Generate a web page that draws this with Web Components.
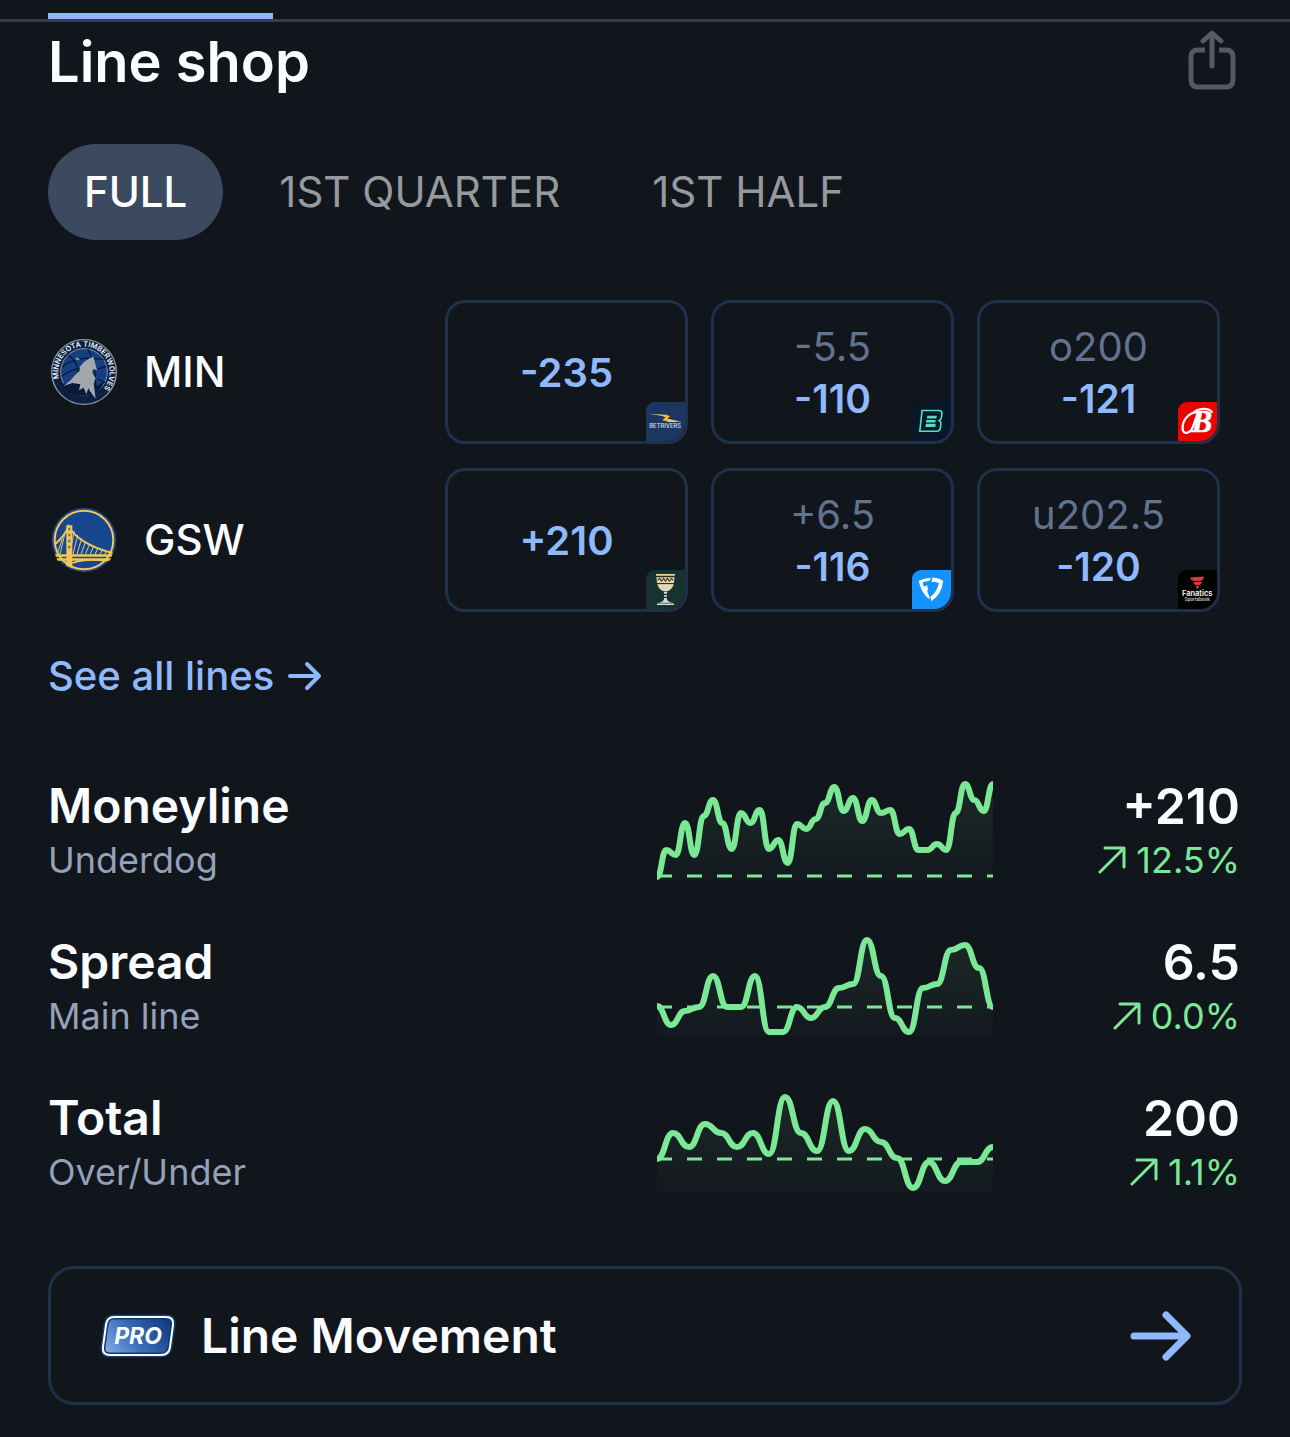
<!DOCTYPE html>
<html lang="en">
<head>
<meta charset="utf-8">
<meta name="viewport" content="width=device-width, initial-scale=1">
<title>Line shop</title>
<style>
  html {
    background: #11151c;
  }
  body {
    margin: 0;
    color: #fafcff;
    font-family: Inter, 'Liberation Sans', sans-serif;
    --accent: #8fb9fd;
    --line: #1f304a;
    --up: #7be895;
    --muted: #94a1b8;
  }
</style>
</head>
<body>
<line-shop></line-shop>

<script>
'use strict';

const bookLogos = {
  betrivers: `
    <rect width="120" height="120" fill="#1b3660"/>
    <path d="M9 36L62 39L74 44L66 51L108 61L68 61L50 55L60 48L46 41Z" fill="#f0bd3c"/>
    <path d="M9 36L48 41L56 44ZM108 61L72 57L66 61Z" fill="#dfe3e6"/>
    <text x="59" y="81" font-size="18" font-weight="500" fill="#dbe3ef" text-anchor="middle">BETRIVERS</text>`,
  espnbet: `
    <rect width="120" height="120" fill="#0a1728"/>
    <path d="M31 26H84Q93 27 92 37L90 49Q89 55 84 57Q90 61 89 68L87 81Q85 90 76 90H24Z" fill="none" stroke="#4fe0cb" stroke-width="5"/>
    <path d="M47 42H76L75 51H46ZM44 55H73L72 63H43ZM43 67H73L72 77H41Z" fill="#4fe0cb"/>`,
  bally: `
    <rect width="120" height="120" fill="#ec0000"/>
    <text x="42" y="91" font-family="Liberation Serif, serif" font-style="italic" font-size="94" fill="#fff" stroke="#fff" stroke-width="2">B</text>
    <path d="M64 33C38 26 13 55 14 82C15 102 39 98 46 76L61 34M46 34C62 17 96 17 104 31" fill="none" stroke="#fff" stroke-width="7" stroke-linecap="round"/>`,
  goblet: `
    <rect width="120" height="120" fill="#17332f"/>
    <path d="M31 12H89V18H31ZM32 22H88L86 40H34ZM35 43H85C83 57 70 66 60 66C50 66 37 57 35 43Z" fill="#e3d9a5"/>
    <path d="M32 20H88M34 42H86" stroke="#2b3026" stroke-width="3"/>
    <path d="M36 32L42 26L48 34L54 26L60 34L66 26L72 34L78 26L84 32" fill="none" stroke="#4b4a28" stroke-width="4"/>
    <path d="M45 45H76L66 60H54Z" fill="#d8d8d3"/>
    <path d="M55 68H65V73H55ZM56 77H64V82H56ZM56 86H64C64 96 72 98 83 101H37C48 98 56 96 56 86ZM34 103H86V108H34Z" fill="#dededb"/>`,
  fanduel: `
    <rect width="120" height="120" fill="#1493ff"/>
    <path d="M21 33Q37 25 58 24L53 34Q42 35 33 38Q34 45 36 51L49 48L45 58L39 59Q43 70 52 78L55 91Q26 70 21 33Z" fill="#fff"/>
    <path d="M64 23Q82 24 96 33Q92 75 59 96L57 82Q77 68 83 40Q72 36 59 36Z" fill="#fff"/>
    <path d="M38 58L50 54L47 67L54 83L48 82Q40 72 38 58Z" fill="#fff"/>`,
  fanatics: `
    <rect width="120" height="120" fill="#000"/>
    <path d="M36 24Q58 20 81 21Q78 32 68 34L50 34Q40 33 36 24ZM46 38Q58 36 74 36Q71 47 60 47L56 47Q48 45 46 38ZM55 49H65Q64 55 59 59Q56 55 55 49Z" fill="#d63c40"/>
    <text x="59" y="81" font-size="23" font-weight="600" fill="#fff" text-anchor="middle">Fanatics</text>
    <text x="59" y="96" font-size="14" fill="#cfcfcf" text-anchor="middle">Sportsbook</text>`
};

const teamLogos = {
  MIN: `
    <circle cx="99" cy="99" r="97" fill="#0c2041" stroke="#8b98a8" stroke-width="4"/>
    <circle cx="99" cy="99" r="70" fill="#153f82" stroke="#8b98a8" stroke-width="3"/>
    <path d="M34 84Q80 46 158 62M52 50Q86 62 92 168M110 30Q140 80 132 164M32 112Q70 84 104 88M140 90L166 82M140 120L166 132" fill="none" stroke="#0a1a36" stroke-width="4"/>
    <path d="M30 133Q58 138 76 116L140 140L160 126Q148 170 99 170Q50 170 30 133Z" fill="#081a38"/>
    <path d="M127 53L134 78L138 94L126 90L124 102L134 118L128 132L134 179L118 158L112 148L106 166L98 146L84 154L88 136L64 132L38 141L60 122L72 108L86 96L86 84L98 70L116 58Z" fill="#a2a6ad"/>
    <path d="M72 57L82 56L86 63L76 64Z" fill="#55bd4a"/>
    <path id="ring" d="M28 130A77 77 0 1 1 150 157" fill="none"/>
    <text font-size="22" font-weight="600" fill="#f1f4f7"><textPath href="#ring" startOffset="50%" text-anchor="middle">MINNESOTA TIMBERWOLVES</textPath></text>`,
  GSW: `
    <circle cx="99" cy="99" r="97" fill="#1c4480"/>
    <circle cx="99" cy="99" r="88" fill="#16478f" stroke="#f2c65a" stroke-width="6"/>
    <path d="M50 66L50 142M41 82L27 142M34 96L18 142M70 73L56 142M80 84L66 142M92 94L78 142M104 103L90 142M116 111L103 142M128 117L118 142M141 123L132 142M154 128L147 142M167 132L161 142" stroke="#d9c88f" stroke-width="3"/>
    <path d="M12 112Q42 86 52 58Q84 112 184 138" fill="none" stroke="#f2c65a" stroke-width="6"/>
    <path d="M13 142H184L182 149H14ZM16 154H180L176 161H20Z" fill="#f2c65a"/>
    <path d="M46 55H64V184L46 176Z" fill="#f2c65a"/>
    <path d="M52 66H58M52 84H58M52 102H58M52 120H58" stroke="#4b6698" stroke-width="8"/>
    <path d="M64 168Q104 154 170 161" fill="none" stroke="#f2c65a" stroke-width="5"/>`
};

// evenly spaced values joined by curves that are level at every point
function smoothPath(values, width) {
  const step = width / (values.length - 1);
  let d = `M0 ${values[0]}`;
  for (let i = 1; i < values.length; i++) {
    const x = i * step;
    const mid = (x - step / 2).toFixed(1);
    d += `C${mid} ${values[i - 1]} ${mid} ${values[i]} ${x.toFixed(1)} ${values[i]}`;
  }
  return d;
}

class BaseElement extends HTMLElement {
  connectedCallback() {
    if (!this.shadowRoot) {
      this.attachShadow({ mode: 'open' });
    }
    this.shadowRoot.innerHTML = this.render();
  }
  attr(name) {
    return this.getAttribute(name) || '';
  }
}

class TopIndicator extends BaseElement {
  render() {
    return `
      <style>
        :host {
          display: block;
          padding: 13px 48px 0;
          border-bottom: 3px solid #3a3d42;
        }
        span {
          display: block;
          width: 225px;
          height: 6px;
          background: var(--accent);
        }
      </style>
      <span></span>`;
  }
}

class ShopHeader extends BaseElement {
  render() {
    return `
      <style>
        :host {
          display: flex;
          align-items: center;
          justify-content: space-between;
          height: 80px;
          padding: 0 52px 0 48px;
        }
        h1 {
          margin: 0;
          font-size: 56px;
          line-height: 80px;
          font-weight: 600;
        }
        button {
          display: flex;
          padding: 0;
          border: 0;
          background: none;
          color: #56595e;
        }
      </style>
      <h1><slot></slot></h1>
      <button type="button" aria-label="Share">
        <svg width="52" height="64" viewBox="0 0 52 64" fill="none" stroke="currentColor" stroke-width="5" stroke-linecap="round" stroke-linejoin="round">
          <path d="M26 36V4M17 11L26 3L35 11"/>
          <path d="M19 20H12Q5 20 5 27V50Q5 57 12 57H40Q47 57 47 50V27Q47 20 40 20H33" stroke-linecap="butt"/>
        </svg>
      </button>`;
  }
}

class PeriodTab extends BaseElement {
  render() {
    const selected = this.hasAttribute('selected');
    return `
      <style>
        :host {
          display: block;
        }
        button {
          height: 96px;
          padding: 0 36px;
          border: 0;
          border-radius: 48px;
          background: none;
          color: #96999d;
          font: 400 42px/96px Inter, 'Liberation Sans', sans-serif;
          white-space: nowrap;
        }
        button[aria-pressed="true"] {
          background: #3c4a60;
          color: #fff;
          font-weight: 500;
        }
      </style>
      <button type="button" aria-pressed="${selected}"><slot></slot></button>`;
  }
}

class TeamName extends BaseElement {
  render() {
    const code = this.attr('code');
    return `
      <style>
        :host {
          display: flex;
          align-items: center;
          gap: 24px;
          font-size: 42px;
          line-height: 52px;
          font-weight: 500;
        }
        svg {
          width: 66px;
          height: 66px;
          margin: 0 3px;
        }
      </style>
      <svg viewBox="0 0 198 198" aria-hidden="true">${teamLogos[code]}</svg>
      <span>${code}</span>`;
  }
}

class OddsCell extends BaseElement {
  render() {
    const line = this.attr('line');
    return `
      <style>
        :host {
          display: block;
        }
        button {
          position: relative;
          display: flex;
          flex-direction: column;
          align-items: center;
          justify-content: center;
          width: 100%;
          height: 144px;
          padding: 2px 0 0;
          overflow: hidden;
          border: 3px solid var(--line);
          border-radius: 20px;
          background: none;
          color: var(--accent);
          font: 600 40px/52px Inter, 'Liberation Sans', sans-serif;
        }
        .line {
          color: #62738e;
          font-weight: 400;
        }
        .line + .price {
          font-size: 39px;
        }
        svg {
          position: absolute;
          right: 0;
          bottom: 0;
          width: 39px;
          height: 39px;
          border-top-left-radius: 9px;
        }
      </style>
      <button type="button">
        ${line ? `<span class="line">${line}</span>` : ''}
        <span class="price">${this.attr('price')}</span>
        <svg viewBox="0 0 120 120" aria-hidden="true">${bookLogos[this.attr('book')]}</svg>
      </button>`;
  }
}

class OddsBoard extends BaseElement {
  render() {
    return `
      <style>
        :host {
          display: grid;
          grid-template-columns: 1fr repeat(3, 243px);
          gap: 24px 23px;
          align-items: center;
          padding: 60px 70px 0 48px;
        }
      </style>
      <slot></slot>`;
  }
}

class AllLines extends BaseElement {
  render() {
    return `
      <style>
        :host {
          display: flex;
          padding: 38px 48px 0;
        }
        a {
          display: flex;
          align-items: center;
          gap: 14px;
          color: var(--accent);
          font-size: 40px;
          line-height: 52px;
          font-weight: 500;
          text-decoration: none;
        }
      </style>
      <a href="#lines"><slot></slot>
        <svg width="34" height="30" viewBox="0 0 34 30" fill="none" stroke="currentColor" stroke-width="4" stroke-linecap="round" stroke-linejoin="round" aria-hidden="true">
          <path d="M2 15H30M19 3L31 15L19 27"/>
        </svg>
      </a>`;
  }
}

class TrendChart extends BaseElement {
  render() {
    const values = this.attr('values').split(',').map(Number);
    const base = this.attr('base');
    const d = smoothPath(values, 336);
    return `
      <style>
        :host {
          display: block;
        }
        svg {
          display: block;
          width: 100%;
          height: 100px;
        }
      </style>
      <svg viewBox="0 0 336 100" preserveAspectRatio="none" fill="none" aria-hidden="true">
        <defs>
          <linearGradient id="fade" x1="0" y1="0" x2="0" y2="100" gradientUnits="userSpaceOnUse">
            <stop offset="0" stop-color="#7be895" stop-opacity="0.1"/>
            <stop offset="1" stop-color="#7be895" stop-opacity="0.02"/>
          </linearGradient>
        </defs>
        <path d="${d}V100H0Z" fill="url(#fade)"/>
        <path d="M0 ${base}H336" stroke="#7be895" stroke-width="3" stroke-dasharray="15 15"/>
        <path d="${d}" stroke="#7be895" stroke-width="6" stroke-linejoin="round" stroke-linecap="square"/>
      </svg>`;
  }
}

class TrendRow extends BaseElement {
  render() {
    return `
      <style>
        :host {
          display: grid;
          grid-template-columns: 1fr 336px 249px;
        }
        .text {
          display: flex;
          flex-direction: column;
          gap: 8px;
        }
        .end {
          align-items: flex-end;
          padding-right: 2px;
        }
        h2, strong {
          margin: 0;
          font-size: 48px;
          line-height: 52px;
          font-weight: 600;
        }
        strong {
          font-size: 50px;
        }
        .sub {
          color: var(--muted);
          font-size: 36px;
          line-height: 40px;
        }
        .end .sub {
          display: flex;
          align-items: center;
          gap: 10px;
          color: var(--up);
        }
      </style>
      <div class="text">
        <h2>${this.attr('name')}</h2>
        <span class="sub">${this.attr('note')}</span>
      </div>
      <slot></slot>
      <div class="text end">
        <strong>${this.attr('value')}</strong>
        <span class="sub">
          <svg width="28" height="28" viewBox="0 0 28 28" fill="none" stroke="currentColor" stroke-width="3" stroke-linecap="round" stroke-linejoin="round" aria-hidden="true">
            <path d="M2 26L26 2M7 2H26V21"/>
          </svg>
          <span>${this.attr('change')}</span>
        </span>
      </div>`;
  }
}

class TrendList extends BaseElement {
  render() {
    return `
      <style>
        :host {
          display: flex;
          flex-direction: column;
          gap: 56px;
          padding: 78px 48px 0;
        }
      </style>
      <slot></slot>`;
  }
}

class ProLink extends BaseElement {
  render() {
    return `
      <style>
        :host {
          display: block;
          padding: 74px 48px 32px;
        }
        a {
          display: flex;
          align-items: center;
          gap: 24px;
          padding: 36px 48px;
          border: 3px solid var(--line);
          border-radius: 26px;
          color: inherit;
          font-size: 48px;
          line-height: 61px;
          font-weight: 600;
          text-decoration: none;
        }
        .label {
          flex: 1;
        }
        .arrow {
          color: var(--accent);
        }
      </style>
      <a href="#movement">
        <svg width="78" height="46" viewBox="0 0 78 46" aria-hidden="true">
          <defs>
            <linearGradient id="pro" x1="0" y1="0.7" x2="1" y2="0.3">
              <stop offset="0" stop-color="#7da6e0"/>
              <stop offset="0.4" stop-color="#3d71bd"/>
              <stop offset="1" stop-color="#103b80"/>
            </linearGradient>
          </defs>
          <path d="M15 4H67Q75 4 74 12L71 34Q70 42 62 42H11Q3 42 4 34L7 12Q8 4 15 4Z" fill="url(#pro)" stroke="#153a70" stroke-width="5"/>
          <path d="M15 4H67Q75 4 74 12L71 34Q70 42 62 42H11Q3 42 4 34L7 12Q8 4 15 4Z" fill="none" stroke="#fff" stroke-width="2"/>
          <text x="39" y="31" font-size="23" font-weight="700" font-style="italic" fill="#fff" text-anchor="middle">PRO</text>
        </svg>
        <span class="label"><slot></slot></span>
        <svg class="arrow" width="62" height="52" viewBox="0 0 62 52" fill="none" stroke="currentColor" stroke-width="7" stroke-linecap="round" stroke-linejoin="round" aria-hidden="true">
          <path d="M5 26H57M37 5L58 26L37 47"/>
        </svg>
      </a>`;
  }
}

class LineShop extends BaseElement {
  render() {
    return `
      <style>
        :host {
          display: block;
        }
        nav {
          display: flex;
          gap: 20px;
          padding: 42px 48px 0;
        }
      </style>
      <top-indicator></top-indicator>
      <shop-header>Line shop</shop-header>
      <nav aria-label="Period">
        <period-tab selected>FULL</period-tab>
        <period-tab>1ST QUARTER</period-tab>
        <period-tab>1ST HALF</period-tab>
      </nav>
      <odds-board>
        <team-name code="MIN"></team-name>
        <odds-cell price="-235" book="betrivers"></odds-cell>
        <odds-cell line="-5.5" price="-110" book="espnbet"></odds-cell>
        <odds-cell line="o200" price="-121" book="bally"></odds-cell>
        <team-name code="GSW"></team-name>
        <odds-cell price="+210" book="goblet"></odds-cell>
        <odds-cell line="+6.5" price="-116" book="fanduel"></odds-cell>
        <odds-cell line="u202.5" price="-120" book="fanatics"></odds-cell>
      </odds-board>
      <all-lines>See all lines</all-lines>
      <trend-list>
        <trend-row name="Moneyline" note="Underdog" value="+210" change="12.5%">
          <trend-chart base="96" values="97,70,75,43,75,36,20,43,69,33,43,30,69,60,83,44,49,39,23,7,31,18,41,20,33,30,54,49,70,70,64,70,33,4,20,31,4"></trend-chart>
        </trend-row>
        <trend-row name="Spread" note="Main line" value="6.5" change="0.0%">
          <trend-chart base="71" values="70,89,75,71,40,71,71,40,96,96,71,82,71,52,48,4,40,82,96,52,48,14,9,32,71"></trend-chart>
        </trend-row>
        <trend-row name="Total" note="Over/Under" value="200" change="1.1%">
          <trend-chart base="67" values="67,41,55,32,41,55,41,62,5,41,59,9,59,37,50,66,96,70,89,70,70,55"></trend-chart>
        </trend-row>
      </trend-list>
      <pro-link>Line Movement</pro-link>`;
  }
}

customElements.define('top-indicator', TopIndicator);
customElements.define('shop-header', ShopHeader);
customElements.define('period-tab', PeriodTab);
customElements.define('team-name', TeamName);
customElements.define('odds-cell', OddsCell);
customElements.define('odds-board', OddsBoard);
customElements.define('all-lines', AllLines);
customElements.define('trend-chart', TrendChart);
customElements.define('trend-row', TrendRow);
customElements.define('trend-list', TrendList);
customElements.define('pro-link', ProLink);
customElements.define('line-shop', LineShop);
</script>
</body>
</html>
